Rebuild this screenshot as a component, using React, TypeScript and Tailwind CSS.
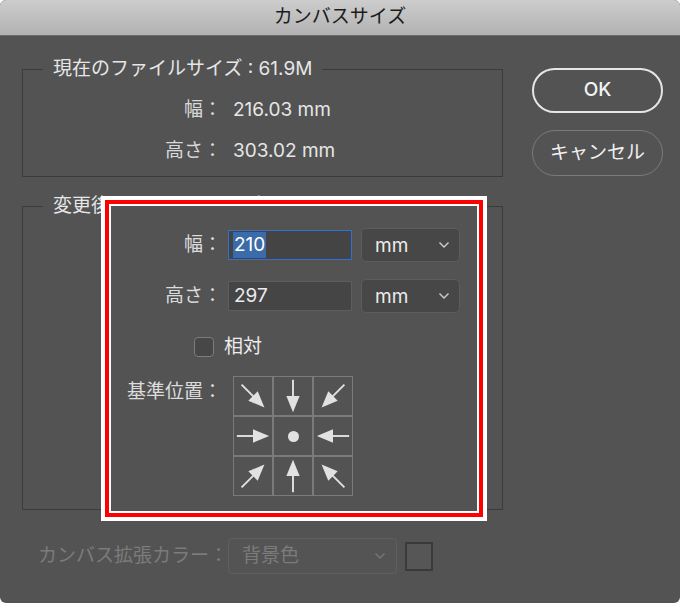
const font = { fontFamily: '"Inter", "Noto Sans CJK JP", sans-serif' };

function Chevron({ color = "#cfcfcf" }: { color?: string }) {
  return (
    <svg width="12" height="8" viewBox="0 0 12 8">
      <polyline points="1.5,1.5 6,6 10.5,1.5" fill="none" stroke={color} strokeWidth="1.4" />
    </svg>
  );
}

function Arrow({ angle }: { angle: number }) {
  return (
    <svg width="38" height="38" viewBox="0 0 40 40">
      <g transform={`rotate(${angle} 20 20)`} fill="#e2e2e2" stroke="#e2e2e2">
        <line x1="3" y1="20" x2="22" y2="20" strokeWidth="2" />
        <polygon points="20,13 37,20 20,27" strokeWidth="0" />
      </g>
    </svg>
  );
}

const arrows: (number | null)[] = [45, 90, 135, 0, null, 180, -45, -90, -135];

function UnitSelect() {
  return (
    <div className="ml-[9px] flex h-[34px] w-[99px] items-center justify-between rounded-[5px] border border-[#5c5c5c] bg-[#474747] pl-[13px] pr-[9px] text-[19px] leading-none text-[#ececec]">
      <span>mm</span>
      <Chevron />
    </div>
  );
}

export default function App() {
  return (
    <div className="h-[605px] w-[680px] bg-white" style={font}>
      <div className="flex h-[603px] w-[680px] flex-col overflow-hidden rounded-[6px] bg-[#535353]">
        <div className="flex h-[36px] shrink-0 items-center justify-center border-b border-[#6a6a6a] bg-gradient-to-b from-[#cdcdcd] to-[#b2b2b2] text-[19px] text-[#1c1c1c]">
          カンバスサイズ
        </div>

        <div className="flex pl-[22px] pt-[22px]">
          <div className="w-[481px]">
            <fieldset className="border border-[#3b3b3b] text-[#e6e6e6]">
              <legend className="ml-[20px] px-[10px] text-[19px] leading-[22px]">
                現在のファイルサイズ : 61.9M
              </legend>
              <div className="flex flex-col gap-[17px] pb-[13px] pt-[18px] text-[19px] leading-[24px]">
                <div className="flex">
                  <span className="w-[199px] text-right text-[#d9d9d9]">幅：</span>
                  <span className="ml-[11px]">216.03 mm</span>
                </div>
                <div className="flex">
                  <span className="w-[199px] text-right text-[#d9d9d9]">高さ：</span>
                  <span className="ml-[11px]">303.02 mm</span>
                </div>
              </div>
            </fieldset>

            <fieldset className="mt-[18px] border border-[#3b3b3b] text-[#e6e6e6]">
              <legend className="ml-[20px] px-[10px] text-[19px] leading-[22px]">
                変更後のファイルサイズ : 59.0M
              </legend>
              <div className="relative z-10 -mb-[12px] -mt-[21px] ml-[78px] w-[386px] border-4 border-white">
                <div className="border-4 border-[#ff0000]">
                  <div className="h-[309px] border-2 border-white bg-[#535353] pt-[22px] text-[19px] leading-[24px]">
                    <div className="flex h-[34px] items-center">
                      <span className="w-[111px] text-right text-[#dcdcdc]">幅：</span>
                      <div className="ml-[6px] flex h-[30px] w-[124px] items-center border border-[#2f6fd6] bg-[#444444] pl-[4px]">
                        <span className="bg-[#3b6ba8] px-[1px] leading-[26px] text-white">210</span>
                      </div>
                      <UnitSelect />
                    </div>
                    <div className="mt-[17px] flex h-[34px] items-center">
                      <span className="w-[111px] text-right text-[#dcdcdc]">高さ：</span>
                      <div className="ml-[6px] flex h-[30px] w-[124px] items-center border border-[#5e5e5e] bg-[#454545] pl-[5px] text-[#ececec]">
                        297
                      </div>
                      <UnitSelect />
                    </div>
                    <div className="mt-[24px] flex h-[20px] items-center">
                      <div className="ml-[83px] h-[20px] w-[20px] rounded-[4px] border-[1.5px] border-[#7c7c7c] bg-[#474747]" />
                      <span className="ml-[10px] text-[#ececec]">相対</span>
                    </div>
                    <div className="mt-[19px] flex items-start">
                      <span className="w-[111px] pt-[4px] text-right text-[#dcdcdc]">基準位置：</span>
                      <div className="ml-[11px] grid grid-cols-3 gap-[2px] bg-[#7a7a7a] p-[1px]">
                        {arrows.map((a, i) => (
                          <div key={i} className="flex h-[38px] w-[38px] items-center justify-center bg-[#535353]">
                            {a === null ? (
                              <div className="h-[11px] w-[11px] rounded-full bg-[#e2e2e2]" />
                            ) : (
                              <Arrow angle={a} />
                            )}
                          </div>
                        ))}
                      </div>
                    </div>
                  </div>
                </div>
              </div>
            </fieldset>

            <div className="mt-[28px] flex items-center text-[19px] leading-[24px] text-[#7b7b7b]">
              <span className="ml-[16px] w-[190px]">カンバス拡張カラー：</span>
              <div className="flex h-[36px] w-[169px] items-center justify-between rounded-[4px] border border-[#5f5f5f] bg-[#545454] pl-[13px] pr-[10px]">
                <span>背景色</span>
                <Chevron color="#777777" />
              </div>
              <div className="ml-[8px] h-[29px] w-[28px] border-2 border-[#3a3a3a] bg-[#565656]" />
            </div>
          </div>

          <div className="ml-[29px] mt-[10px] flex w-[131px] flex-col">
            <div className="flex h-[45px] items-center justify-center rounded-full border-2 border-[#e6e6e6] text-[19px] font-medium text-[#f4f4f4]">
              OK
            </div>
            <div className="mt-[17px] flex h-[46px] items-center justify-center rounded-full border-[1.5px] border-[#7b7b7b] text-[19px] text-[#f0f0f0]">
              キャンセル
            </div>
          </div>
        </div>
      </div>
    </div>
  );
}
